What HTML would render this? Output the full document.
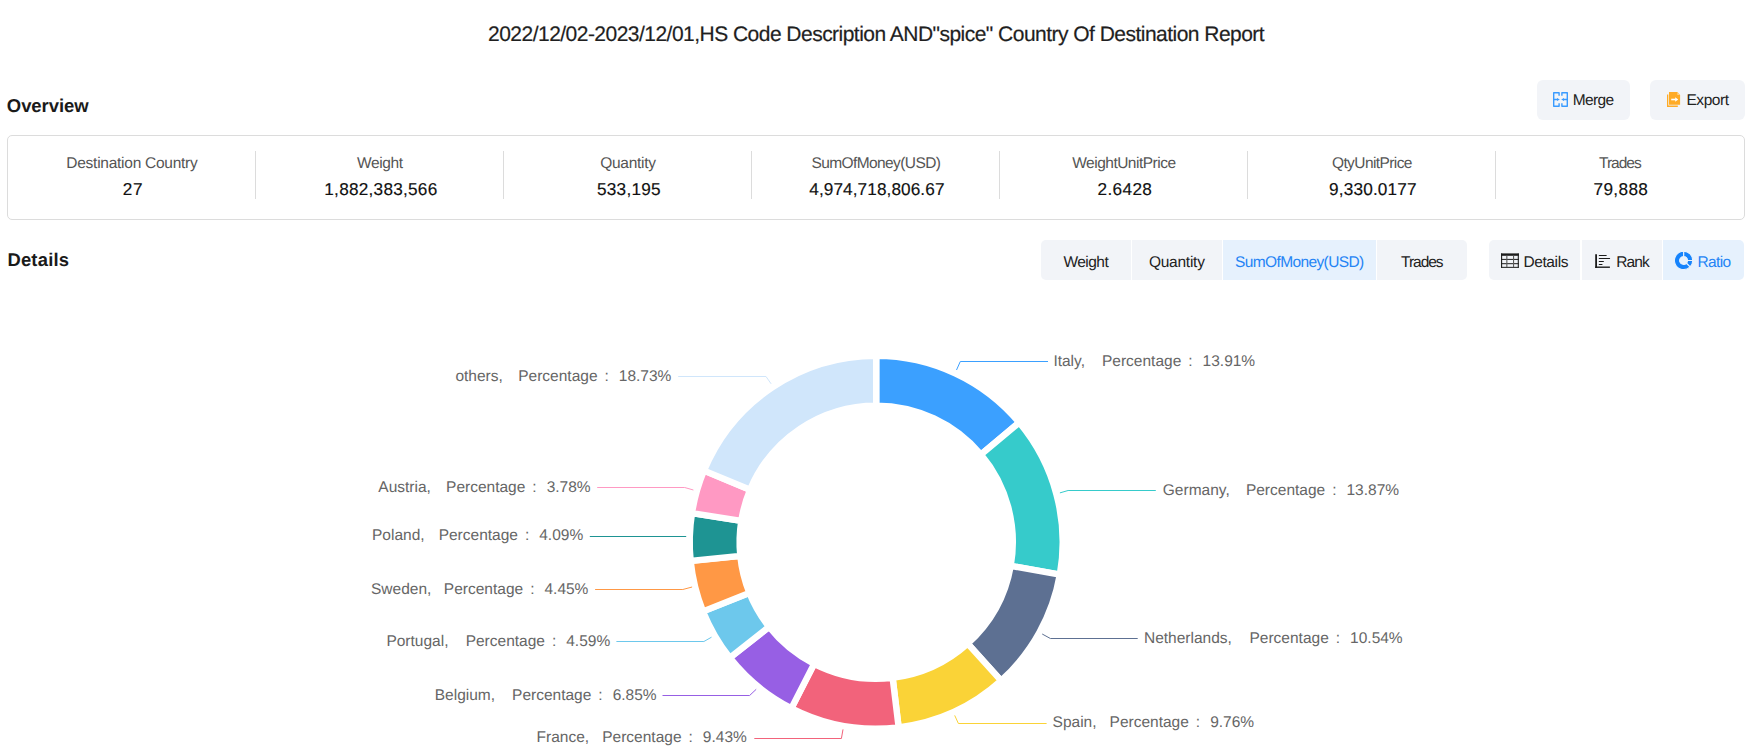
<!DOCTYPE html>
<html><head><meta charset="utf-8"><title>Country Of Destination Report</title>
<style>
html,body{margin:0;padding:0;background:#fff}
body{width:1756px;height:753px;position:relative;overflow:hidden;font-family:"Liberation Sans",sans-serif;text-rendering:geometricPrecision}
.t{position:absolute;white-space:pre}
.btn{position:absolute;background:#f2f4f8;border-radius:6px}
</style></head><body>
<svg style="position:absolute;left:0;top:0" width="1756" height="753" viewBox="0 0 1756 753">
<path d="M876.200 355.700A186.5 186.5 0 0 1 1019.226 422.510L980.958 454.534A136.6 136.6 0 0 0 876.200 405.600Z" fill="#3ba0ff" stroke="#fff" stroke-width="6.4" stroke-linejoin="miter"/>
<path d="M1019.226 422.510A186.5 186.5 0 0 1 1059.862 574.611L1010.721 565.939A136.6 136.6 0 0 0 980.958 454.534Z" fill="#36cbcb" stroke="#fff" stroke-width="6.4" stroke-linejoin="miter"/>
<path d="M1059.862 574.611A186.5 186.5 0 0 1 1001.109 680.692L967.688 643.637A136.6 136.6 0 0 0 1010.721 565.939Z" fill="#5d7092" stroke="#fff" stroke-width="6.4" stroke-linejoin="miter"/>
<path d="M1001.109 680.692A186.5 186.5 0 0 1 898.644 727.345L892.639 677.807A136.6 136.6 0 0 0 967.688 643.637Z" fill="#fad337" stroke="#fff" stroke-width="6.4" stroke-linejoin="miter"/>
<path d="M898.644 727.345A186.5 186.5 0 0 1 791.426 708.319L814.108 663.873A136.6 136.6 0 0 0 892.639 677.807Z" fill="#f2637b" stroke="#fff" stroke-width="6.4" stroke-linejoin="miter"/>
<path d="M791.426 708.319A186.5 186.5 0 0 1 729.847 657.799L769.005 626.869A136.6 136.6 0 0 0 814.108 663.873Z" fill="#975fe4" stroke="#fff" stroke-width="6.4" stroke-linejoin="miter"/>
<path d="M729.847 657.799A186.5 186.5 0 0 1 703.013 611.400L749.351 592.885A136.6 136.6 0 0 0 769.005 626.869Z" fill="#6dc8ec" stroke="#fff" stroke-width="6.4" stroke-linejoin="miter"/>
<path d="M703.013 611.400A186.5 186.5 0 0 1 690.642 560.917L740.290 555.909A136.6 136.6 0 0 0 749.351 592.885Z" fill="#ff9845" stroke="#fff" stroke-width="6.4" stroke-linejoin="miter"/>
<path d="M690.642 560.917A186.5 186.5 0 0 1 691.978 513.141L741.268 520.916A136.6 136.6 0 0 0 740.290 555.909Z" fill="#1e9493" stroke="#fff" stroke-width="6.4" stroke-linejoin="miter"/>
<path d="M691.978 513.141A186.5 186.5 0 0 1 703.986 470.613L750.064 489.767A136.6 136.6 0 0 0 741.268 520.916Z" fill="#ff99c3" stroke="#fff" stroke-width="6.4" stroke-linejoin="miter"/>
<path d="M703.986 470.613A186.5 186.5 0 0 1 876.200 355.700L876.200 405.600A136.6 136.6 0 0 0 750.064 489.767Z" fill="#d0e6fb" stroke="#fff" stroke-width="6.4" stroke-linejoin="miter"/>
<path d="M956.5 370.0 L960.3 361.5 L1048.0 361.5" fill="none" stroke="#3ba0ff" stroke-width="1"/>
<path d="M1059.9 492.9 L1068.1 490.5 L1155.8 490.5" fill="none" stroke="#36cbcb" stroke-width="1"/>
<path d="M1042.2 634.0 L1050.4 638.5 L1137.7 638.5" fill="none" stroke="#5d7092" stroke-width="1"/>
<path d="M954.7 715.4 L958.4 723.5 L1046.6 723.5" fill="none" stroke="#fad337" stroke-width="1"/>
<path d="M843.0 729.4 L841.4 738.5 L754.3 738.5" fill="none" stroke="#f2637b" stroke-width="1"/>
<path d="M756.2 689.3 L749.6 695.5 L662.5 695.5" fill="none" stroke="#975fe4" stroke-width="1"/>
<path d="M711.5 637.2 L703.9 641.5 L616.4 641.5" fill="none" stroke="#6dc8ec" stroke-width="1"/>
<path d="M692.1 587.0 L682.8 589.5 L595.1 589.5" fill="none" stroke="#ff9845" stroke-width="1"/>
<path d="M686.2 536.5 L680.0 536.5 L589.8 536.5" fill="none" stroke="#1e9493" stroke-width="1"/>
<path d="M693.4 490.0 L684.7 487.5 L597.2 487.5" fill="none" stroke="#ff99c3" stroke-width="1"/>
<path d="M771.1 383.8 L766.0 376.5 L678.2 376.5" fill="none" stroke="#d0e6fb" stroke-width="1"/>
</svg>
<div class="t" style="left:-123.90px;width:2000px;text-align:center;top:23.37px;font-size:21px;line-height:24px;color:#1f1f1f;font-weight:400;letter-spacing:-0.526px;-webkit-text-stroke:0.2px #1f1f1f;">2022/12/02-2023/12/01,HS Code Description AND"spice" Country Of Destination Report</div>
<div class="t" style="left:6.80px;top:94.39px;font-size:18.5px;line-height:24px;color:#1a1a1a;font-weight:700;letter-spacing:-0.057px;">Overview</div>
<div class="t" style="left:7.40px;top:248.42px;font-size:18.4px;line-height:24px;color:#1a1a1a;font-weight:700;letter-spacing:0.233px;">Details</div>
<div class="btn" style="left:1537px;top:80px;width:93px;height:39.5px"></div>
<div class="btn" style="left:1650px;top:80px;width:95px;height:39.5px"></div>
<svg style="position:absolute;left:1552px;top:91px" width="17" height="17" viewBox="0 0 17 17">
<g fill="none" stroke="#3a9bff" stroke-width="1.4" stroke-linejoin="round">
<path d="M7.1 4.7V1.8H1.7V15.2H7.1V12.2"/>
<path d="M9.9 4.7V1.8H15.3V15.2H9.9V12.2"/>
<path d="M1.7 8.5H5.6 M15.3 8.5H11.4"/>
</g>
<path d="M5 7.1L7.8 8.5L5 9.9Z M12 7.1L9.2 8.5L12 9.9Z" fill="#3a9bff"/>
</svg><div class="t" style="left:1572.80px;top:91.23px;font-size:15.5px;line-height:20px;color:#222;font-weight:400;letter-spacing:-0.675px;">Merge</div>
<svg style="position:absolute;left:1666px;top:91px" width="16" height="17" viewBox="0 0 16 17">
<path d="M1 3.5H2.3V14.6H11.8V15.9H1Z" fill="#ffab26"/>
<path d="M3 1.1H11.3L14.1 3.9V13.8H3Z" fill="#ffab26"/>
<path d="M11.3 1.1V3.9H14.1" fill="#ffd38a"/>
<path d="M5.2 8.5H9.6" stroke="#fff" stroke-width="1.6"/><path d="M9.2 6.2L12.2 8.5L9.2 10.8Z" fill="#fff"/>
</svg><div class="t" style="left:1686.40px;top:91.23px;font-size:15.5px;line-height:20px;color:#222;font-weight:400;letter-spacing:-0.42px;">Export</div>
<div style="position:absolute;left:7px;top:135px;width:1736px;height:83px;border:1px solid #dcdcdc;border-radius:5px"></div>
<div class="t" style="left:-868.10px;width:2000px;text-align:center;top:153.83px;font-size:15.5px;line-height:20px;color:#555;font-weight:400;letter-spacing:-0.261px;">Destination Country</div>
<div class="t" style="left:-867.10px;width:2000px;text-align:center;top:179.14px;font-size:17.2px;line-height:20px;color:#111;font-weight:400;letter-spacing:0.5px;-webkit-text-stroke:0.15px #111;">27</div>
<div class="t" style="left:-620.10px;width:2000px;text-align:center;top:153.83px;font-size:15.5px;line-height:20px;color:#555;font-weight:400;letter-spacing:-0.38px;">Weight</div>
<div class="t" style="left:-619.10px;width:2000px;text-align:center;top:179.14px;font-size:17.2px;line-height:20px;color:#111;font-weight:400;letter-spacing:0.25px;-webkit-text-stroke:0.15px #111;">1,882,383,566</div>
<div style="position:absolute;left:255px;top:151px;width:1px;height:48px;background:#dcdcdc"></div>
<div class="t" style="left:-372.10px;width:2000px;text-align:center;top:153.83px;font-size:15.5px;line-height:20px;color:#555;font-weight:400;letter-spacing:-0.286px;">Quantity</div>
<div class="t" style="left:-371.10px;width:2000px;text-align:center;top:179.14px;font-size:17.2px;line-height:20px;color:#111;font-weight:400;letter-spacing:0.25px;-webkit-text-stroke:0.15px #111;">533,195</div>
<div style="position:absolute;left:503px;top:151px;width:1px;height:48px;background:#dcdcdc"></div>
<div class="t" style="left:-124.10px;width:2000px;text-align:center;top:153.83px;font-size:15.5px;line-height:20px;color:#555;font-weight:400;letter-spacing:-0.6px;">SumOfMoney(USD)</div>
<div class="t" style="left:-123.10px;width:2000px;text-align:center;top:179.14px;font-size:17.2px;line-height:20px;color:#111;font-weight:400;letter-spacing:0.093px;-webkit-text-stroke:0.15px #111;">4,974,718,806.67</div>
<div style="position:absolute;left:751px;top:151px;width:1px;height:48px;background:#dcdcdc"></div>
<div class="t" style="left:123.90px;width:2000px;text-align:center;top:153.83px;font-size:15.5px;line-height:20px;color:#555;font-weight:400;letter-spacing:-0.507px;">WeightUnitPrice</div>
<div class="t" style="left:124.90px;width:2000px;text-align:center;top:179.14px;font-size:17.2px;line-height:20px;color:#111;font-weight:400;letter-spacing:0.38px;-webkit-text-stroke:0.15px #111;">2.6428</div>
<div style="position:absolute;left:999px;top:151px;width:1px;height:48px;background:#dcdcdc"></div>
<div class="t" style="left:371.90px;width:2000px;text-align:center;top:153.83px;font-size:15.5px;line-height:20px;color:#555;font-weight:400;letter-spacing:-0.591px;">QtyUnitPrice</div>
<div class="t" style="left:372.90px;width:2000px;text-align:center;top:179.14px;font-size:17.2px;line-height:20px;color:#111;font-weight:400;letter-spacing:0.189px;-webkit-text-stroke:0.15px #111;">9,330.0177</div>
<div style="position:absolute;left:1247px;top:151px;width:1px;height:48px;background:#dcdcdc"></div>
<div class="t" style="left:619.90px;width:2000px;text-align:center;top:153.83px;font-size:15.5px;line-height:20px;color:#555;font-weight:400;letter-spacing:-0.98px;">Trades</div>
<div class="t" style="left:620.90px;width:2000px;text-align:center;top:179.14px;font-size:17.2px;line-height:20px;color:#111;font-weight:400;letter-spacing:0.36px;-webkit-text-stroke:0.15px #111;">79,888</div>
<div style="position:absolute;left:1495px;top:151px;width:1px;height:48px;background:#dcdcdc"></div>
<div style="position:absolute;left:1041px;top:240px;width:90px;height:40px;background:#f2f4f8;border-radius:5px 0 0 5px;"></div>
<div class="t" style="left:85.80px;width:2000px;text-align:center;top:252.83px;font-size:15.5px;line-height:20px;color:#222;font-weight:400;letter-spacing:-0.52px;">Weight</div>
<div style="position:absolute;left:1132px;top:240px;width:90px;height:40px;background:#f2f4f8;"></div>
<div class="t" style="left:176.80px;width:2000px;text-align:center;top:252.83px;font-size:15.5px;line-height:20px;color:#222;font-weight:400;letter-spacing:-0.243px;">Quantity</div>
<div style="position:absolute;left:1223px;top:240px;width:153px;height:40px;background:#e6f1fd;"></div>
<div class="t" style="left:299.30px;width:2000px;text-align:center;top:252.83px;font-size:15.5px;line-height:20px;color:#2584f5;font-weight:400;letter-spacing:-0.614px;">SumOfMoney(USD)</div>
<div style="position:absolute;left:1377px;top:240px;width:90px;height:40px;background:#f2f4f8;border-radius:0 5px 5px 0;"></div>
<div class="t" style="left:421.80px;width:2000px;text-align:center;top:252.83px;font-size:15.5px;line-height:20px;color:#222;font-weight:400;letter-spacing:-1.04px;">Trades</div>
<div style="position:absolute;left:1489px;top:240px;width:91px;height:40px;background:#f2f4f8;border-radius:5px 0 0 5px;"></div>
<div style="position:absolute;left:1582px;top:240px;width:80px;height:40px;background:#f2f4f8;"></div>
<div style="position:absolute;left:1663px;top:240px;width:81px;height:40px;background:#e6f1fd;border-radius:0 5px 5px 0;"></div>
<div class="t" style="left:1523.40px;top:253.43px;font-size:15.5px;line-height:20px;color:#222;font-weight:400;letter-spacing:-0.383px;">Details</div>
<div class="t" style="left:1616.20px;top:253.43px;font-size:15.5px;line-height:20px;color:#222;font-weight:400;letter-spacing:-0.833px;">Rank</div>
<div class="t" style="left:1697.40px;top:253.33px;font-size:15.5px;line-height:20px;color:#2584f5;font-weight:400;letter-spacing:-0.625px;">Ratio</div>
<svg style="position:absolute;left:1501px;top:253px" width="19" height="16" viewBox="0 0 19 16">
<rect x="0" y="0.4" width="17.8" height="2.4" fill="#1c1c1c"/>
<path d="M0.6 0.4V14.8 M17.3 0.4V14.8" stroke="#1c1c1c" stroke-width="1.1"/>
<path d="M0 6.4H17.8 M0 10.7H17.8 M0 14.35H17.8" stroke="#1c1c1c" stroke-width="1"/>
<path d="M5.85 2.6V14 M12.55 2.6V14" stroke="#5a5a5a" stroke-width="1.1"/>
</svg><svg style="position:absolute;left:1594px;top:253px" width="17" height="16" viewBox="0 0 17 16">
<path d="M2.1 1.2V14.9" stroke="#1c1c1c" stroke-width="1.8"/>
<path d="M1.2 14.2H15.9" stroke="#1c1c1c" stroke-width="1.4"/>
<path d="M5.3 2.5H12.2 M5.3 5.5H15.6 M5.3 8.5H9.4 M5.3 11.5H8" stroke="#1c1c1c" stroke-width="1.1" stroke-linecap="round"/>
</svg><svg style="position:absolute;left:1674px;top:251px" width="20" height="20" viewBox="0 0 20 20"><path d="M9.600 0.300A9.15 9.15 0 0 1 18.750 9.450L13.550 9.450A3.95 3.95 0 0 0 9.600 5.500Z" fill="#1583fc" stroke="#e6f1fd" stroke-width="1.1"/><path d="M18.750 9.450A9.15 9.15 0 0 1 16.070 15.920L12.393 12.243A3.95 3.95 0 0 0 13.550 9.450Z" fill="#1583fc" stroke="#e6f1fd" stroke-width="1.1"/><path d="M16.070 15.920A9.15 9.15 0 1 1 9.600 0.300L9.600 5.500A3.95 3.95 0 1 0 12.393 12.243Z" fill="#1583fc" stroke="#e6f1fd" stroke-width="1.1"/></svg>
<div class="t" style="left:1053.40px;top:351.83px;font-size:15.5px;line-height:20px;color:#666;font-weight:400;"><span>Italy,</span><span style="margin-left:17.0px">Percentage</span><span style="margin-left:7px">:</span><span style="margin-left:10px">13.91%</span></div>
<div class="t" style="left:1162.80px;top:480.63px;font-size:15.5px;line-height:20px;color:#666;font-weight:400;"><span>Germany,</span><span style="margin-left:16.2px">Percentage</span><span style="margin-left:7px">:</span><span style="margin-left:10px">13.87%</span></div>
<div class="t" style="left:1144.00px;top:629.43px;font-size:15.5px;line-height:20px;color:#666;font-weight:400;"><span>Netherlands,</span><span style="margin-left:17.6px">Percentage</span><span style="margin-left:7px">:</span><span style="margin-left:10px">10.54%</span></div>
<div class="t" style="left:1052.60px;top:712.83px;font-size:15.5px;line-height:20px;color:#666;font-weight:400;"><span>Spain,</span><span style="margin-left:13.0px">Percentage</span><span style="margin-left:7px">:</span><span style="margin-left:10px">9.76%</span></div>
<div class="t" style="left:146.80px;width:600px;text-align:right;top:727.83px;font-size:15.5px;line-height:20px;color:#666;font-weight:400;"><span>France,</span><span style="margin-left:13.1px">Percentage</span><span style="margin-left:7px">:</span><span style="margin-left:10px">9.43%</span></div>
<div class="t" style="left:56.60px;width:600px;text-align:right;top:685.63px;font-size:15.5px;line-height:20px;color:#666;font-weight:400;"><span>Belgium,</span><span style="margin-left:17.0px">Percentage</span><span style="margin-left:7px">:</span><span style="margin-left:10px">6.85%</span></div>
<div class="t" style="left:10.20px;width:600px;text-align:right;top:631.63px;font-size:15.5px;line-height:20px;color:#666;font-weight:400;"><span>Portugal,</span><span style="margin-left:17.2px">Percentage</span><span style="margin-left:7px">:</span><span style="margin-left:10px">4.59%</span></div>
<div class="t" style="left:-11.60px;width:600px;text-align:right;top:579.83px;font-size:15.5px;line-height:20px;color:#666;font-weight:400;"><span>Sweden,</span><span style="margin-left:12.5px">Percentage</span><span style="margin-left:7px">:</span><span style="margin-left:10px">4.45%</span></div>
<div class="t" style="left:-16.80px;width:600px;text-align:right;top:525.63px;font-size:15.5px;line-height:20px;color:#666;font-weight:400;"><span>Poland,</span><span style="margin-left:14.1px">Percentage</span><span style="margin-left:7px">:</span><span style="margin-left:10px">4.09%</span></div>
<div class="t" style="left:-9.40px;width:600px;text-align:right;top:478.43px;font-size:15.5px;line-height:20px;color:#666;font-weight:400;"><span>Austria,</span><span style="margin-left:15.2px">Percentage</span><span style="margin-left:7px">:</span><span style="margin-left:10px">3.78%</span></div>
<div class="t" style="left:71.40px;width:600px;text-align:right;top:367.23px;font-size:15.5px;line-height:20px;color:#666;font-weight:400;"><span>others,</span><span style="margin-left:15.4px">Percentage</span><span style="margin-left:7px">:</span><span style="margin-left:10px">18.73%</span></div>

</body></html>
